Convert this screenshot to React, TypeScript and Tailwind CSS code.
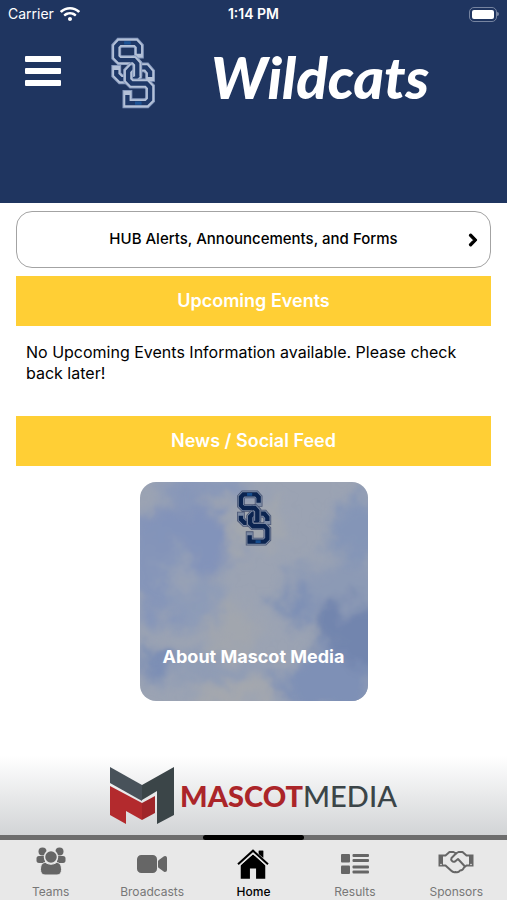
import React from "react";
import { FaChevronRight, FaWifi } from "react-icons/fa";
import { IoVideocam } from "react-icons/io5";
import { clsx } from "clsx";

const UPPER = "M117 72V50L107 39H58L48 50V82L58 92H102L112 103V140L103 150H62L48 136V122";
const LOWER = "M151 143V128L139 114H95L84 126V152L95 163H140L151 174V212L140 223H82V198";

function Monogram({ className, dark }: { className?: string; dark?: boolean }) {
  const rim = dark ? "#4a5674" : "#8699bd";
  const line = dark ? "#7c8aa3" : "#b4c1d8";
  const fill = dark ? "#0b2450" : "#1e3868";
  return (
    <svg viewBox="32 22 134 218" className={className} fill="none" aria-label="SS">
      {[UPPER, LOWER].map((d) => (
        <g key={d}>
          <path d={d} stroke={rim} strokeWidth="30" strokeLinecap="square" strokeDasharray="none" />
          <path d={d} stroke={line} strokeWidth="24" strokeLinecap="square" />
          <path d={d} stroke={fill} strokeWidth={dark ? 17 : 13} />
        </g>
      ))}
      <path d="M98 92H102L112 103V140" stroke={rim} strokeWidth="30" />
      <path d="M94 92H102L112 103V142" stroke={line} strokeWidth="24" />
      <path d="M90 92H102L112 103V144" stroke={fill} strokeWidth={dark ? 17 : 13} />
      <path d="M72 39H92M105 223H125" stroke="#1d5fa8" strokeWidth="10" opacity="0.7" />
    </svg>
  );
}

function Watercolor() {
  return (
    <svg viewBox="0 0 228 220" preserveAspectRatio="none" className="absolute inset-0 h-full w-full" aria-hidden="true">
      <defs>
        <filter id="wash" x="-20%" y="-20%" width="140%" height="140%">
          <feTurbulence type="fractalNoise" baseFrequency="0.03" numOctaves="5" seed="7" result="n" />
          <feGaussianBlur in="SourceGraphic" stdDeviation="8" result="b" />
          <feDisplacementMap in="b" in2="n" scale="50" xChannelSelector="R" yChannelSelector="G" result="d" />
          <feGaussianBlur in="d" stdDeviation="1" />
        </filter>
      </defs>
      <rect width="228" height="220" fill="#9ba3b3" />
      <g filter="url(#wash)">
        <ellipse cx="40" cy="60" rx="52" ry="40" fill="#8293ba" />
        <ellipse cx="70" cy="8" rx="50" ry="12" fill="#8797b9" />
        <ellipse cx="20" cy="95" rx="34" ry="46" fill="#8595b9" />
        <ellipse cx="60" cy="120" rx="24" ry="24" fill="#8d9bb8" />
        <ellipse cx="216" cy="50" rx="28" ry="34" fill="#8495b7" />
        <ellipse cx="195" cy="112" rx="48" ry="34" fill="#8c9ab5" />
        <ellipse cx="158" cy="122" rx="20" ry="16" fill="#7d8fb5" />
        <ellipse cx="218" cy="160" rx="42" ry="36" fill="#7285ae" />
        <ellipse cx="185" cy="205" rx="54" ry="28" fill="#7e90b6" />
        <ellipse cx="14" cy="178" rx="18" ry="14" fill="#768ab5" />
        <ellipse cx="70" cy="190" rx="60" ry="12" fill="#8e9bb5" />
        <ellipse cx="95" cy="216" rx="45" ry="12" fill="#a5a8ad" />
        <ellipse cx="40" cy="90" rx="16" ry="18" fill="#98a2b5" />
        <ellipse cx="115" cy="45" rx="28" ry="28" fill="#a3a7ae" />
        <ellipse cx="90" cy="150" rx="24" ry="30" fill="#a1a6ae" />
      </g>
    </svg>
  );
}

function TeamsIcon() {
  return (
    <svg viewBox="0 0 30 28" className="mb-1.5 h-7 w-8" fill="currentColor">
      <circle cx="6.5" cy="4.5" r="4" />
      <circle cx="23.5" cy="4.5" r="4" />
      <path d="M3 9h6v7H3C1.200 16 .5 15 .5 13.500V11.500C.5 10 1.200 9 3 9Z" />
      <path d="M27 9h-6v7h6c1.800 0 2.500-1 2.500-2.500V11.500c0-1.500-.7-2.500-2.500-2.500Z" />
      <circle cx="15" cy="10" r="6.500" stroke="#e8e8e8" strokeWidth="1.500" />
      <path
        d="M9.500 15.500c3.300 2.300 7.700 2.300 11 0 3.500 0 5 3 5 7 0 3.500-1.500 5.500-4.500 5.500H9c-3 0-4.500-2-4.500-5.500 0-4 1.500-7 5-7Z"
        stroke="#e8e8e8"
      />
    </svg>
  );
}

function HomeIcon() {
  return (
    <svg viewBox="0 0 94 86" className="h-[30px] w-8">
      <path d="M64 4H77V30L64 18Z" fill="currentColor" />
      <path d="M11 46L47 14L83 46V86H56V56H38V86H11Z" fill="currentColor" />
      <path d="M3 46L47 6L91 46" fill="none" stroke="#e8e8e8" strokeWidth="12" />
      <path d="M3 44L47 4L91 44" fill="none" stroke="currentColor" strokeWidth="6" />
      <path d="M64 4H77V24L64 13Z" fill="currentColor" />
    </svg>
  );
}

function ResultsIcon() {
  return (
    <svg viewBox="0 0 28 20" className="h-5 w-7" fill="currentColor">
      <rect width="9" height="8.500" rx="1" />
      <rect y="11.500" width="9" height="8.500" rx="1" />
      <rect x="11.500" width="16.500" height="3" rx="1" />
      <rect x="11.500" y="5" width="16.500" height="3" rx="1" />
      <rect x="11.500" y="11.500" width="16.500" height="3" rx="1" />
      <rect x="11.500" y="16.500" width="16.500" height="3" rx="1" />
    </svg>
  );
}

function SponsorsIcon() {
  return (
    <svg viewBox="0 0 36 24" className="mb-1 h-6 w-9" fill="none" stroke="currentColor" strokeWidth="2" strokeLinejoin="round">
      <path d="M.5 4.500H5V16.500H.5ZM31 4.500h4.500V16.500H31Z" fill="currentColor" stroke="none" />
      <path d="M5 5.500H7.500L11.500 2H15.500L18 3.500L20.500 2H24.500L28.500 5.500H31" />
      <path d="M5 15.500H7.500L13 20.500C14.500 22 16 22.500 17.500 22C19 22.500 21 22 22 20.500C24 20.500 25.500 19 26 17.500L28.500 15.500H31" />
      <path d="M18 3.500L13.500 8C12.500 10 14.500 12.500 17 11.500L20 9L26.500 16" strokeLinecap="round" />
      <circle cx="3" cy="14.500" r=".8" fill="#e8e8e8" stroke="none" />
      <circle cx="33" cy="14.500" r=".8" fill="#e8e8e8" stroke="none" />
    </svg>
  );
}

const tabs = [
  { label: "Teams", icon: <TeamsIcon /> },
  { label: "Broadcasts", icon: <IoVideocam className="h-8 w-8" /> },
  { label: "Home", icon: <HomeIcon />, active: true },
  { label: "Results", icon: <ResultsIcon /> },
  { label: "Sponsors", icon: <SponsorsIcon /> },
];

function SectionTitle({ children }: { children: React.ReactNode }) {
  return (
    <h2 className="bg-[#ffcf35] py-3 text-center text-lg leading-[26px] font-semibold text-white">{children}</h2>
  );
}

export default function App() {
  return (
    <div className="flex min-h-screen flex-col bg-white font-['Inter',sans-serif] text-black">
      <header className="h-[203px] bg-[#1f3560] text-white">
        {/* Status bar */}
        <div className="grid h-7 grid-cols-3 items-center px-2 text-sm">
          <div className="flex items-center gap-1.5">
            <span>Carrier</span>
            <FaWifi className="h-4 w-5" />
          </div>
          <span className="text-center font-semibold">1:14 PM</span>
          <div className="flex items-center justify-end">
            <span className="h-[15px] w-7 rounded-[5px] border border-[#7684a0] p-0.5">
              <span className="block h-full rounded-[2px] bg-white" />
            </span>
            <span className="h-1 w-0.5 rounded-r bg-[#7684a0]" />
          </div>
        </div>
        <div className="flex h-[90px] items-center pl-[25px]">
          <button aria-label="Open menu" className="mb-1 flex w-9 flex-col gap-1.5">
            <span className="h-1.5 w-full rounded-[1px] bg-white" />
            <span className="h-1.5 w-full rounded-[1px] bg-white" />
            <span className="h-1.5 w-full rounded-[1px] bg-white" />
          </button>
          <Monogram className="ml-[50px] h-[72px] w-11" />
          <h1 className="ml-14 pt-2 font-['Lato',sans-serif] text-[58px] leading-none font-black italic">Wildcats</h1>
        </div>
      </header>

      <main className="flex-1 px-4 pt-2">
        <button className="relative flex h-[57px] w-full items-center justify-center rounded-2xl border border-[#a3a3a3] px-8 text-[15px] font-medium">
          HUB Alerts, Announcements, and Forms
          <FaChevronRight className="absolute right-2.5 h-3.5 w-3.5" stroke="currentColor" strokeWidth="40" />
        </button>
        <section className="mt-2">
          <SectionTitle>Upcoming Events</SectionTitle>
          <p className="px-2.5 pt-4 pb-8 text-base leading-[21px]">
            No Upcoming Events Information available. Please check back later!
          </p>
        </section>
        <section>
          <SectionTitle>News / Social Feed</SectionTitle>
          <a
            href="#about"
            className="relative mx-auto mt-4 flex h-[219px] w-[228px] flex-col items-center justify-between overflow-hidden rounded-2xl pt-2 pb-8 text-white"
          >
            <Watercolor />
            <Monogram dark className="relative h-14 w-9" />
            <span className="relative text-lg leading-6 font-bold">About Mascot Media</span>
          </a>
        </section>
      </main>

      <footer>
        <a
          href="#sponsor"
          className="flex h-[79px] items-center justify-center gap-1.5 bg-linear-to-b from-white to-[#d2d4d6] text-[#3b4548]"
        >
          <svg viewBox="0 0 64 58" className="h-[58px] w-16" aria-hidden="true">
            <path d="M0 0L32 18V34L0 16Z" fill="#48525a" />
            <path d="M32 18L64 0V48L47 57V24L32 33Z" fill="#3b4548" />
            <path d="M0 19L32 36V53L16 44V57L0 48Z" fill="#b32a2d" />
            <path d="M32 36L45 29V46L32 53Z" fill="#a02529" />
          </svg>
          <span className="font-['Lato',sans-serif] text-[29px] leading-none font-medium">
            <b className="font-black text-[#ab2529]">MASCOT</b>MEDIA
          </span>
        </a>
        <nav className="grid grid-cols-5 bg-[#e8e8e8]">
          {tabs.map((tab) => (
            <a
              key={tab.label}
              href={`#${tab.label.toLowerCase()}`}
              className={clsx(
                "flex flex-col items-center text-xs leading-4",
                tab.active ? "font-medium text-black" : "text-[#777]"
              )}
            >
              <span className="h-[5px] w-full bg-[#6d6d6d]">
                {tab.active && <span className="block h-full rounded-full bg-black" />}
              </span>
              <span className={clsx("flex h-11 items-center pt-1", !tab.active && "text-[#666]")}>{tab.icon}</span>
              {tab.label}
            </a>
          ))}
        </nav>
      </footer>
    </div>
  );
}
